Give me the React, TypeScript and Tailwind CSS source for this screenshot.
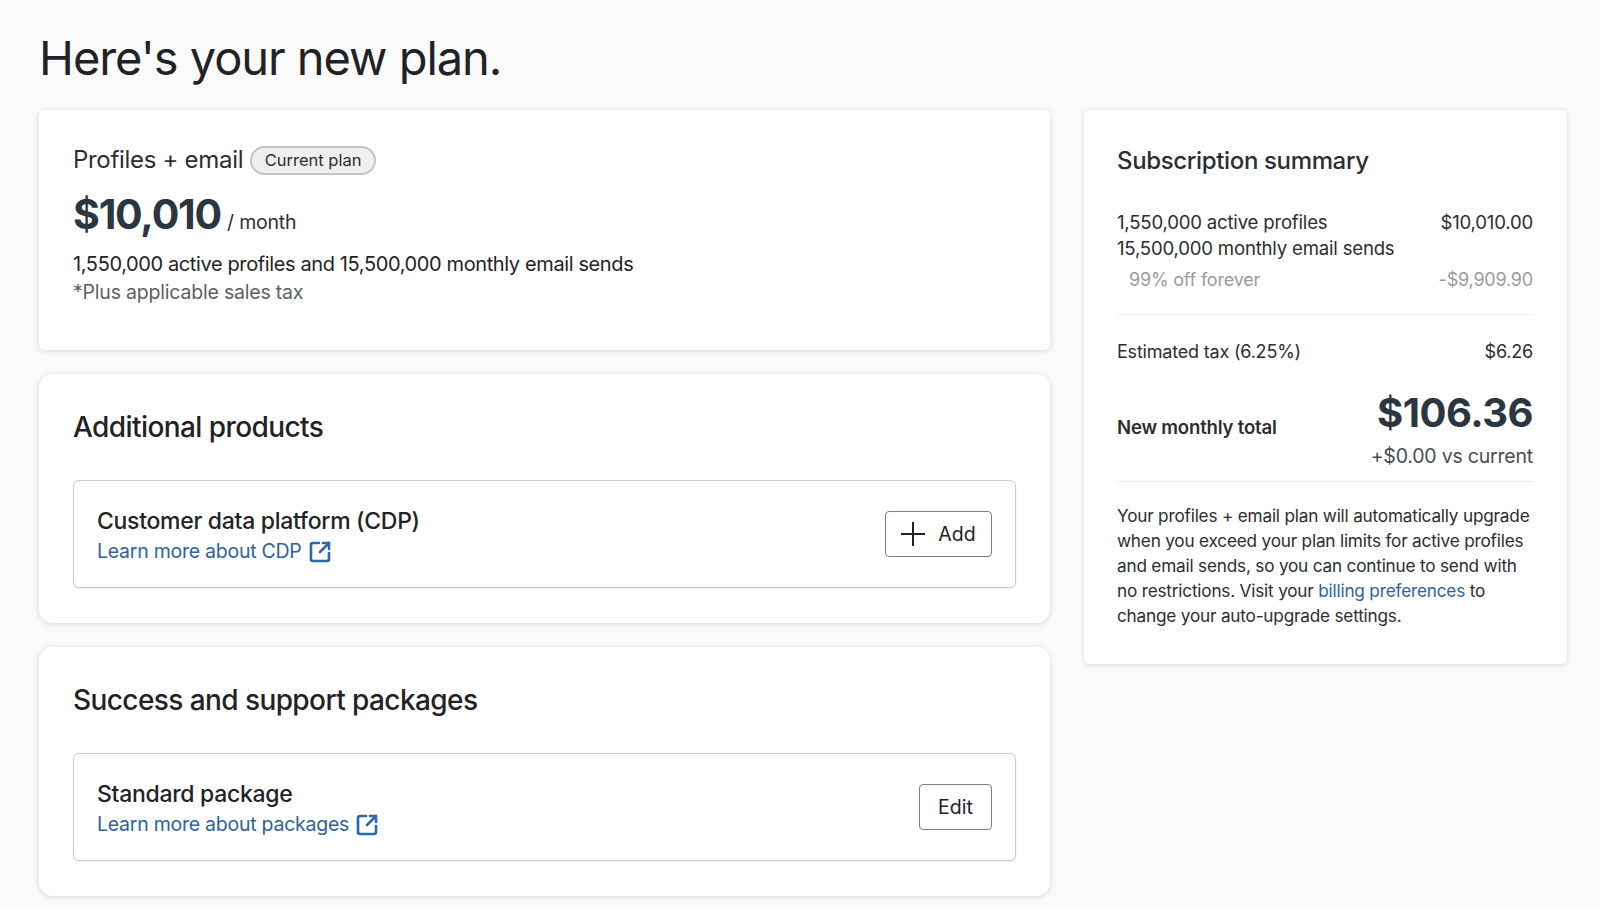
import { SquareArrowOutUpRight } from "lucide-react"

type ProductRowProps = {
  title: string
  link: string
  action: React.ReactNode
}

function ProductRow({ title, link, action }: ProductRowProps) {
  return (
    <div className="mt-[36px] flex h-[108px] items-center justify-between rounded-[6px] border border-[#c9cbcd] bg-white px-[23px] shadow-[0_1px_2px_rgba(0,0,0,0.08)]">
      <div className="pt-[3px]">
        <h3 className="text-[23px] leading-[32px] font-medium tracking-[-0.3px] text-[#1f2326]">{title}</h3>
        <a className="flex h-[30px] items-center gap-[6px] text-[19.5px] tracking-[-0.25px] text-[#2f6397]">
          {link}
          <SquareArrowOutUpRight className="h-[24px] w-[24px] text-[#2a6aa8]" strokeWidth={2.6} />
        </a>
      </div>
      {action}
    </div>
  )
}

function SectionCard({ title, row }: { title: string; row: ProductRowProps }) {
  return (
    <section className="h-[249px] rounded-[14px] bg-white px-[34px] pt-[36px] shadow-[0_1px_6px_rgba(0,0,0,0.13)]">
      <h2 className="text-[28px] leading-[34px] font-medium tracking-[-0.58px] text-[#1f2326]">{title}</h2>
      <ProductRow {...row} />
    </section>
  )
}

function SummaryRow({ label, value, className = "" }: { label: string; value: string; className?: string }) {
  return (
    <div className={`flex justify-between ${className}`}>
      <span>{label}</span>
      <span>{value}</span>
    </div>
  )
}

export default function App() {
  return (
    <div className="min-h-[909px] bg-[#fafafa] pr-[33px] pl-[39px] font-['Inter','Liberation_Sans',sans-serif] text-[#2b2e31]">
      <h1 className="pt-[28px] text-[47px] leading-[60px] tracking-[-1.05px] text-[#1f2326]">Here's your new plan.</h1>

      <div className="mt-[22px] flex items-start gap-[34px]">
        <div className="flex w-[1011px] shrink-0 flex-col gap-[24px]">
          <section className="h-[240px] rounded-[6px] bg-white px-[34px] pt-[35px] shadow-[0_1px_6px_rgba(0,0,0,0.13)]">
            <div className="flex items-center gap-[7px]">
              <span className="text-[24px] leading-[30px] tracking-[-0.3px] text-[#2b2e31]">Profiles + email</span>
              <span className="flex h-[29px] items-center rounded-full border-2 border-[#c4c4c4] bg-[#efefef] px-[12.5px] text-[16.5px] text-[#2b2e31]">Current plan</span>
            </div>
            <div className="mt-[12px] flex items-baseline gap-[6px]">
              <span className="text-[41px] leading-[54px] font-bold tracking-[-1.2px] text-[#2b3640]">$10,010</span>
              <span className="text-[19.5px] tracking-[-0.2px]">/ month</span>
            </div>
            <p className="mt-[9px] text-[20px] leading-[28px] tracking-[-0.38px] text-[#1f2326]">1,550,000 active profiles and 15,500,000 monthly email sends</p>
            <p className="text-[19.5px] leading-[28px] tracking-[-0.2px] text-[#5c5f62]">*Plus applicable sales tax</p>
          </section>

          <SectionCard
            title="Additional products"
            row={{
              title: "Customer data platform (CDP)",
              link: "Learn more about CDP",
              action: (
                <button className="flex h-[46px] w-[107px] items-center justify-center gap-[13px] rounded-[4px] border border-[#7d7f81] bg-white text-[19.5px] text-[#1f2326]">
                  <svg viewBox="0 0 24 24" className="h-[24px] w-[24px]" fill="none" stroke="currentColor" strokeWidth={2}>
                    <path d="M12 0v24M0 12h24" />
                  </svg>
                  <span className="pt-[2px]">Add</span>
                </button>
              ),
            }}
          />

          <SectionCard
            title="Success and support packages"
            row={{
              title: "Standard package",
              link: "Learn more about packages",
              action: (
                <button className="flex h-[46px] w-[73px] items-center justify-center rounded-[4px] border border-[#7d7f81] bg-white pt-[2px] text-[19.5px] text-[#1f2326]">
                  Edit
                </button>
              ),
            }}
          />
        </div>

        <aside className="h-[554px] w-[483px] shrink-0 rounded-[6px] bg-white pt-[36px] pr-[34px] pl-[33px] text-[18.6px] leading-[25.5px] tracking-[-0.2px] shadow-[0_1px_6px_rgba(0,0,0,0.13)]">
          <h2 className="text-[24px] leading-[30px] font-medium tracking-[-0.35px]">Subscription summary</h2>
          <div className="mt-[34px]">
            <SummaryRow label="1,550,000 active profiles" value="$10,010.00" />
            <div>15,500,000 monthly email sends</div>
            <SummaryRow label="99% off forever" value="-$9,909.90" className="mt-[6px] pl-3 text-[18px] text-[#9a9c9e]" />
          </div>
          <div className="mt-[21px] border-t border-[#f0f0f0]" />
          <SummaryRow label="Estimated tax (6.25%)" value="$6.26" className="mt-[24px] text-[18px]" />
          <div className="mt-[24px] flex items-start justify-between">
            <span className="pt-[27px] font-semibold">New monthly total</span>
            <span className="text-[40px] leading-[50px] font-bold tracking-[-0.5px] text-[#2b3640]">$106.36</span>
          </div>
          <div className="mt-[3px] text-right text-[19.5px] text-[#4a4d50]">+$0.00 vs current</div>
          <div className="mt-[12px] border-t border-[#ececec]" />
          <p className="mt-[21px] text-[17.2px] leading-[25px] tracking-[-0.2px]">
            Your profiles + email plan will automatically upgrade when you exceed your plan limits for active profiles and email sends, so you can continue to send with no restrictions. Visit your <a className="text-[#2f6397]">billing preferences</a> to change your auto-upgrade settings.
          </p>
        </aside>
      </div>
    </div>
  )
}
